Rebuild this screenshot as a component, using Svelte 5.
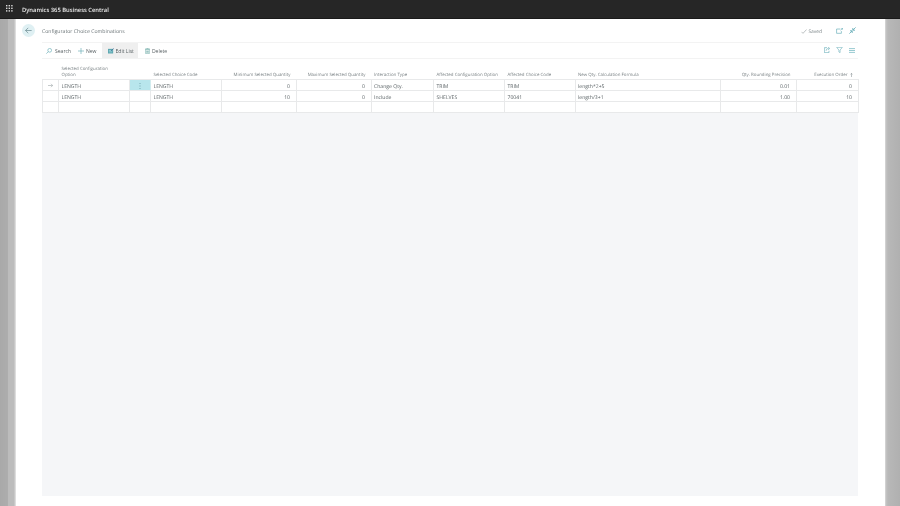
<script>
  const cols = [
    { label: '', align: 'l' },
    { label: 'Selected Configuration Option', align: 'l' },
    { label: '', align: 'l' },
    { label: 'Selected Choice Code', align: 'l' },
    { label: 'Minimum Selected Quantity', align: 'r' },
    { label: 'Maximum Selected Quantity', align: 'r' },
    { label: 'Interaction Type', align: 'l' },
    { label: 'Affected Configuration Option', align: 'l' },
    { label: 'Affected Choice Code', align: 'l' },
    { label: 'New Qty. Calculation Formula', align: 'l' },
    { label: 'Qty. Rounding Precision', align: 'r' },
    { label: 'Execution Order', align: 'r' }
  ];
  const rows = [
    ['', 'LENGTH', '', 'LENGTH', '0', '0', 'Change Qty.', 'TRIM', 'TRIM', 'length*2+5', '0.01', '0'],
    ['', 'LENGTH', '', 'LENGTH', '10', '0', 'Include', 'SHELVES', '70041', 'length/3+1', '1.00', '10'],
    ['', '', '', '', '', '', '', '', '', '', '', '']
  ];
</script>

<div class="shell">
  <header class="topbar">
    <svg class="waffle" width="7" height="7" viewBox="0 0 7 7" fill="#dcdcdc">
      {#each [0, 2.6, 5.2] as y}
        {#each [0, 2.6, 5.2] as x}
          <rect x={x} y={y} width="1.4" height="1.4" />
        {/each}
      {/each}
    </svg>
    <span class="brand">Dynamics 365 Business Central</span>
  </header>

  <div class="stage">
    <div class="gutter left"></div>
    <main class="page">
      <div class="titlebar">
        <button class="back" aria-label="Back">
          <svg width="7" height="7" viewBox="0 0 10 10" fill="none" stroke="#5b7d83" stroke-width="0.9">
            <path d="M9.5 5H.8M4.6 1.2.8 5l3.8 3.8" />
          </svg>
        </button>
        <span class="title">Configurator Choice Combinations</span>
        <span class="saved">
          <svg width="6" height="5" viewBox="0 0 7 6" fill="none" stroke="#7a8486" stroke-width="0.6"><path d="M.5 3.4 2.3 5.2 6.6.6" /></svg>
          Saved
        </span>
        <svg class="tool-a" width="7" height="6" viewBox="0 0 8 7" fill="none" stroke="#6bb0ba" stroke-width="0.8">
          <path d="M5 1.2H.6v5h5.6V3.6M5.2 2.6 7.6.4M6 .3h1.7V2" />
        </svg>
        <svg class="tool-b" width="7" height="7" viewBox="0 0 7 7" fill="none" stroke="#6bb0ba" stroke-width="0.9">
          <path d="M.4 6.6 3 4M1 3.8h2.2V6M6.6.4 4 3M3.8 1v2.2H6" />
        </svg>
      </div>

      <div class="content">
        <nav class="toolbar">
          <button class="cmd search">
            <svg width="6" height="6" viewBox="0 0 7 7" fill="none" stroke="#5ba6b0" stroke-width="0.7"><circle cx="4.3" cy="2.7" r="2.2" /><path d="M2.7 4.3.4 6.6" /></svg>
            Search
          </button>
          <button class="cmd new">
            <svg width="6" height="6" viewBox="0 0 7 7" fill="none" stroke="#5ba6b0" stroke-width="0.7"><path d="M3.5 0v7M0 3.5h7" /></svg>
            New
          </button>
          <button class="cmd active">
            <svg width="6" height="6" viewBox="0 0 7 7"><rect x="0" y="1" width="6" height="5.4" fill="#5ba6b0" /><path d="M1 3h4M1 4.5h4" stroke="#dff" stroke-width="0.5" /><path d="M3.5 3.4 6.6.6" stroke="#3a6f98" stroke-width="0.9" /></svg>
            Edit List
          </button>
          <button class="cmd del">
            <svg width="5" height="6" viewBox="0 0 6 7" fill="none" stroke="#6aa9a4" stroke-width="0.7"><path d="M.8 1.4h4.4v5.3H.8zM0 1.2h6M2 .3h2M2 3v2.6M3 3v2.6M4 3v2.6" /></svg>
            Delete
          </button>
          <div class="tool-right">
            <svg width="6" height="6" viewBox="0 0 7 7" fill="none" stroke="#6bb0ba" stroke-width="0.8"><path d="M3.5.8H.4v5.8h5.4V4.4M2.4 4.4c.2-1.8 1.4-2.7 3-2.7M4.8.3l1.9 1.4L4.8 3.2" /></svg>
            <svg width="7" height="6" viewBox="0 0 7 7" fill="none" stroke="#6bb0ba" stroke-width="0.7"><path d="M.2.4h6.6L4.2 3.6v3L2.8 5.8V3.6z" /></svg>
            <svg width="6" height="5" viewBox="0 0 6 5" fill="none" stroke="#8cc4cc" stroke-width="0.9"><path d="M0 .6h6M0 2.5h6M0 4.4h6" /></svg>
          </div>
        </nav>

        <div class="grid">
          {#each cols as col, i}
            <div class="head" class:right={col.align === 'r'} class:wrap={i === 1}>
              {col.label}
              {#if i === 11}
                <svg class="sort" width="3" height="4" viewBox="0 0 3 5" fill="none" stroke="#707a7e" stroke-width="0.6"><path d="M1.5 5V.5M.2 1.8 1.5.5l1.3 1.3" /></svg>
              {/if}
            </div>
          {/each}

          {#each rows as row, r}
            {#each row as cell, i}
              <div class="cell" class:right={cols[i].align === 'r'} class:first={i === 0} class:menu={r === 0 && i === 2}>
                {#if r === 0 && i === 0}
                  <svg width="5" height="5" viewBox="0 0 6 5" fill="none" stroke="#8a9497" stroke-width="0.6"><path d="M0 2.5h5.6M3.6.5l2 2-2 2" /></svg>
                {:else if r === 0 && i === 2}
                  <svg width="2" height="6" viewBox="0 0 2 7" fill="#5d949c"><rect x="0.5" y="0" width="1" height="1" /><rect x="0.5" y="3" width="1" height="1" /><rect x="0.5" y="6" width="1" height="1" /></svg>
                {:else}
                  {cell}
                {/if}
              </div>
            {/each}
          {/each}
        </div>

        <div class="empty"></div>
      </div>
    </main>
    <div class="gutter right"></div>
  </div>
</div>

<style>
  :global(body) {
    margin: 0;
    background: #fff;
  }
  .shell {
    width: 900px;
    height: 506px;
    display: flex;
    flex-direction: column;
    overflow: hidden;
    font-family: "Open Sans", "Noto Sans", sans-serif;
    color: #5a6265;
    text-rendering: geometricPrecision;
  }
  .topbar {
    height: 18.5px;
    flex: none;
    box-sizing: border-box;
    background: #262626;
    border-bottom: 1px solid #1a1a1a;
    display: flex;
    align-items: center;
    padding-left: 6px;
    gap: 9px;
  }
  .waffle {
    flex: none;
    filter: blur(0.25px);
  }
  .brand {
    color: #ececec;
    font-size: 5.8px;
    font-weight: 600;
    padding-top: 2px;
    filter: blur(0.25px);
  }
  .stage {
    flex: 1;
    display: flex;
    min-height: 0;
  }
  .gutter {
    flex: none;
  }
  .gutter.left {
    width: 16px;
    background: linear-gradient(90deg, #a9a9a9 0, #adadad 8px, #bcbcbc 8px, #bcbcbc 14px, #d4d4d4 15px, #e6e6e6 16px);
  }
  .gutter.right {
    width: 15px;
    background: linear-gradient(270deg, #b0b0b0 0, #b8b8b8 12px, #c4c4c4 14px, #dedede 15px);
  }
  .page {
    flex: 1;
    background: #fff;
    display: flex;
    flex-direction: column;
    min-width: 0;
    padding-bottom: 10px;
  }
  .titlebar {
    height: 23.5px;
    flex: none;
    display: flex;
    align-items: center;
    padding: 1px 29px 0 6px;
    box-sizing: border-box;
    filter: blur(0.25px);
  }
  .back {
    width: 13px;
    height: 13px;
    border-radius: 50%;
    border: 0;
    padding: 0;
    background: #dff0f3;
    display: flex;
    align-items: center;
    justify-content: center;
    margin-right: 7px;
    flex: none;
  }
  .title {
    font-size: 5.15px;
    color: #6b7477;
  }
  .saved {
    margin-left: auto;
    padding-top: 2px;
    font-size: 4.9px;
    color: #7a8386;
    display: flex;
    align-items: center;
    gap: 1px;
  }
  .tool-a {
    margin-left: 14px;
  }
  .tool-b {
    margin-left: 6px;
  }
  .content {
    flex: 1;
    margin: 0 27px 0 26px;
    display: flex;
    flex-direction: column;
    min-height: 0;
    filter: blur(0.25px);
  }
  .toolbar {
    height: 16.5px;
    flex: none;
    box-sizing: border-box;
    border-top: 1.5px solid #f3f3f3;
    border-bottom: 1.5px solid #f3f3f3;
    display: flex;
    align-items: stretch;
    padding-left: 4px;
  }
  .cmd {
    font: inherit;
    font-size: 5.05px;
    color: #5a6265;
    background: none;
    border: 0;
    padding: 1px 0 0;
    display: flex;
    align-items: center;
    gap: 3px;
  }
  .cmd.new {
    margin-left: 7px;
    gap: 2px;
  }
  .cmd.active {
    background: #efefef;
    margin-left: 5px;
    padding: 1px 4px 0 6px;
    gap: 2px;
  }
  .cmd.del {
    margin-left: 7px;
    gap: 2px;
  }
  .tool-right {
    margin-left: auto;
    display: flex;
    align-items: center;
    gap: 6px;
    padding-right: 3px;
  }
  .grid {
    flex: none;
    margin-top: 3.5px;
    display: grid;
    grid-template-columns: 17px 71px 21px 71px 74.5px 75px 62.5px 71px 70.5px 145.5px 75.5px 62px;
    grid-template-rows: 18px 11px 11px 10.5px;
  }
  .head {
    font-size: 4.4px;
    line-height: 6px;
    color: #7a8285;
    padding: 0 2.5px 1px;
    display: flex;
    align-items: flex-end;
    gap: 1px;
    box-sizing: border-box;
    white-space: nowrap;
    border-bottom: 1px solid #e8e9ea;
  }
  .head.wrap {
    white-space: normal;
    padding-right: 16px;
  }
  .head.right {
    justify-content: flex-end;
    padding-right: 6px;
  }
  .cell {
    box-sizing: border-box;
    font-size: 5.1px;
    color: #5a6265;
    padding: 3px 2.5px 0;
    display: flex;
    align-items: center;
    border-right: 1px solid #e8e9ea;
    border-bottom: 1px solid #e8e9ea;
    white-space: nowrap;
  }
  .cell.right {
    justify-content: flex-end;
    padding-right: 5.5px;
  }
  .cell.first {
    border-left: 1px solid #e8e9ea;
    padding: 1px 0 0;
    justify-content: center;
  }
  .cell.menu {
    background: #b8e6ec;
    justify-content: center;
    padding: 1px 0 0;
    border-right-color: #d2ecef;
  }
  .sort {
    margin-left: 1px;
    margin-bottom: 1px;
  }
  .empty {
    flex: 1;
    background: #f5f6f8;
  }
</style>
